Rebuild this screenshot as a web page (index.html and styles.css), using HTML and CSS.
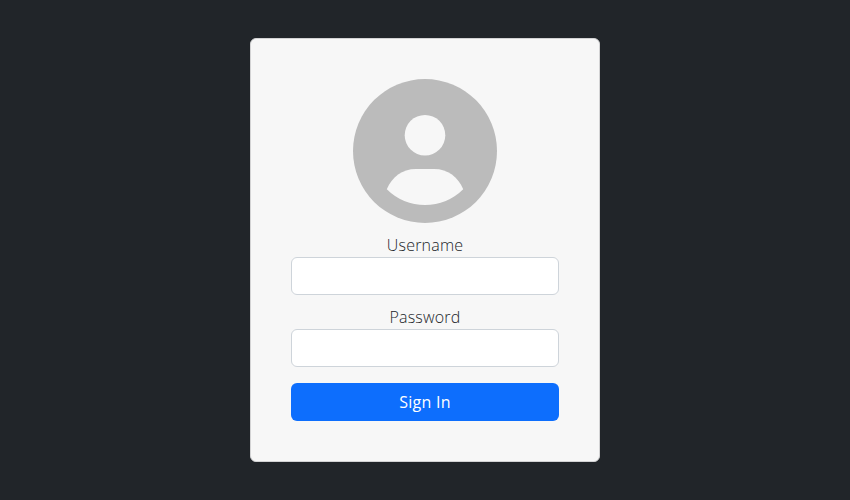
FILE: index.html
```html
<!DOCTYPE html>
<html lang="en">
<head>
<meta charset="utf-8">
<title>Sign In</title>
<link rel="stylesheet" href="styles.css">
</head>
<body>
<main class="card">
  <svg class="avatar" viewBox="0 0 144 144" aria-hidden="true">
    <circle cx="72" cy="72" r="72" fill="#bbb"/>
    <circle cx="72" cy="56.2" r="20.3" fill="#f7f7f7"/>
    <path d="M33.8 110.2C39 98 49 90 63 90H81C95 90 105 98 110.2 110.2A54 54 0 0 1 33.8 110.2Z" fill="#f7f7f7"/>
  </svg>
  <form class="form">
    <label class="label" for="username">Username</label>
    <input class="input" id="username" type="text">
    <label class="label" for="password">Password</label>
    <input class="input" id="password" type="password">
    <button class="button" type="button">Sign In</button>
  </form>
</main>
</body>
</html>
```
FILE: styles.css
```css
* { box-sizing: border-box; }
body {
  margin: 0;
  height: 100vh;
  display: flex;
  align-items: center;
  justify-content: center;
  background: #212529;
  color: #212529;
  font: 400 16px/24px "Segoe UI", "Open Sans", sans-serif;
}
.card {
  width: 350px;
  height: 424px;
  padding: 40px;
  border: 1px solid #d3d3d4;
  border-radius: 6px;
  background: #f7f7f7;
}
.avatar { display: block; width: 144px; height: 144px; margin: 0 auto 10px; }
.form { display: flex; flex-direction: column; }
.label { height: 24px; text-align: center; font-weight: 300; letter-spacing: 0.2px; }
.input {
  width: 100%;
  height: 38px;
  margin: 0 0 10px;
  padding: 6px 12px;
  border: 1px solid #ced4da;
  border-radius: 6px;
  background: #fff;
  font: inherit;
}
.button {
  height: 38px;
  margin-top: 6px;
  padding: 0;
  border: 0;
  border-radius: 6px;
  background: #0d6efd;
  color: #fff;
  font: inherit;
  letter-spacing: 0.25px;
}
```
